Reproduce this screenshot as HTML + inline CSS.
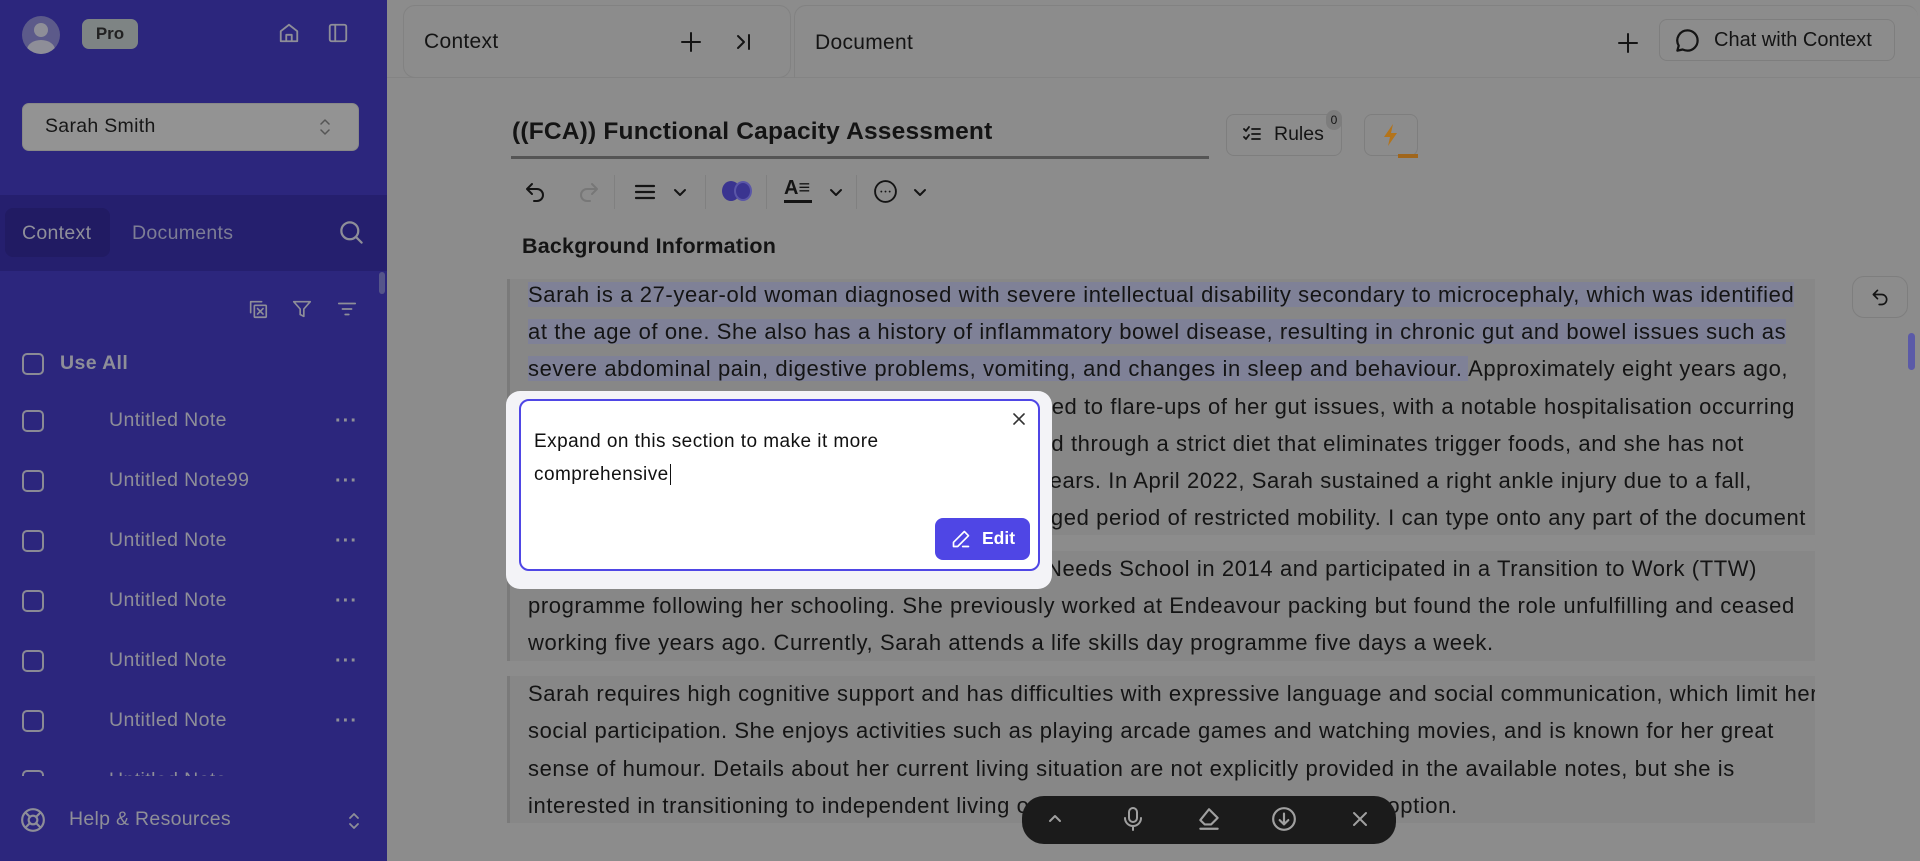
<!DOCTYPE html>
<html><head><meta charset="utf-8"><style>
*{box-sizing:border-box;margin:0;padding:0}
body{width:1920px;height:861px;overflow:hidden;background:#8c8c8c;font-family:"Liberation Sans",sans-serif;position:relative;color:#141414}
.a{position:absolute}
.sb{left:0;top:0;width:387px;height:861px;background:#2c267d;color:#8e8e98}
svg{position:absolute;fill:none;stroke-linecap:round;stroke-linejoin:round}
.row{position:absolute;left:0;width:387px;height:40px}
.cb{position:absolute;left:22px;top:9px;width:22px;height:22px;border:2px solid #8a8a95;border-radius:5px}
.nt{position:absolute;left:109px;top:8px;font-size:19.5px;letter-spacing:0.4px}
.dots{position:absolute;left:335px;top:9px;font-size:20px;letter-spacing:1px;font-weight:bold}
.para{position:absolute;left:507px;width:1308px;background:#878787;border-left:3px solid #7a7a7a;overflow:hidden}
.ln{position:absolute;left:18px;white-space:nowrap;font-size:22px;letter-spacing:0.6px;height:32px;line-height:32px}
.rn{left:auto}
.hl{background:#7f8197}
</style></head><body>
<div class="a sb">
  <div class="a" style="left:22px;top:16px;width:38px;height:38px;border-radius:50%;background:#5c5a8a;overflow:hidden">
    <div class="a" style="left:12px;top:7px;width:14px;height:14px;border-radius:50%;background:#8e8e98"></div>
    <div class="a" style="left:5px;top:24px;width:28px;height:20px;border-radius:50%;background:#8e8e98"></div>
  </div>
  <div class="a" style="left:82px;top:19px;width:56px;height:30px;border-radius:7px;background:#7e8484;color:#222;font-size:17px;font-weight:bold;text-align:center;line-height:30px">Pro</div>
  <svg style="left:278px;top:22px" width="22" height="22" viewBox="0 0 24 24" stroke="#8e8e98" stroke-width="2"><path d="M3 10l9-7 9 7v11H3z M9 21v-7h6v7"/></svg>
  <svg style="left:327px;top:22px" width="22" height="22" viewBox="0 0 24 24" stroke="#8e8e98" stroke-width="2"><rect x="3" y="3" width="18" height="18" rx="2"/><path d="M9 3v18"/></svg>
  <div class="a" style="left:22px;top:103px;width:337px;height:48px;border-radius:7px;background:#939393;border:1px solid #888"></div>
  <div class="a" style="left:45px;top:115px;font-size:19.5px;letter-spacing:0.3px;color:#161616">Sarah Smith</div>
  <svg style="left:318px;top:117px" width="14" height="20" viewBox="0 0 14 20" stroke="#555" stroke-width="1.5"><path d="M3 7l4-4 4 4M3 13l4 4 4-4"/></svg>
  <div class="a" style="left:0;top:195px;width:387px;height:76px;background:#251f6e"></div>
  <div class="a" style="left:5px;top:208px;width:105px;height:49px;border-radius:8px;background:#211b63"></div>
  <div class="a" style="left:22px;top:222px;font-size:19.5px;letter-spacing:0.3px;color:#8f8f9a">Context</div>
  <div class="a" style="left:132px;top:222px;font-size:19.5px;letter-spacing:0.3px;color:#7d7d95">Documents</div>
  <svg style="left:338px;top:219px" width="27" height="27" viewBox="0 0 24 24" stroke="#8e8e98" stroke-width="2"><circle cx="10.5" cy="10.5" r="7.5"/><path d="M16 16l5 5"/></svg>
  <div class="a" style="left:379px;top:272px;width:6px;height:22px;border-radius:3px;background:#55558a"></div>
  <svg style="left:247px;top:298px" width="22" height="22" viewBox="0 0 24 24" stroke="#8e8e98" stroke-width="1.8"><path d="M4 16V4h12"/><rect x="8" y="8" width="13" height="13" rx="1"/><path d="M11.5 11.5l6 6M17.5 11.5l-6 6"/></svg>
  <svg style="left:291px;top:298px" width="22" height="22" viewBox="0 0 24 24" stroke="#8e8e98" stroke-width="1.8"><path d="M3 4h18l-7 8v8l-4-2v-6z"/></svg>
  <svg style="left:336px;top:298px" width="22" height="22" viewBox="0 0 24 24" stroke="#8e8e98" stroke-width="1.8"><path d="M3 6h18M7 12h10M10 18h4"/></svg>
  <div class="row" style="top:344px"><div class="cb"></div><div class="nt" style="left:60px;font-weight:bold">Use All</div></div>
  <div class="row" style="top:401px"><div class="cb"></div><div class="nt">Untitled Note</div><div class="dots">···</div></div>
  <div class="row" style="top:461px"><div class="cb"></div><div class="nt">Untitled Note99</div><div class="dots">···</div></div>
  <div class="row" style="top:521px"><div class="cb"></div><div class="nt">Untitled Note</div><div class="dots">···</div></div>
  <div class="row" style="top:581px"><div class="cb"></div><div class="nt">Untitled Note</div><div class="dots">···</div></div>
  <div class="row" style="top:641px"><div class="cb"></div><div class="nt">Untitled Note</div><div class="dots">···</div></div>
  <div class="row" style="top:701px"><div class="cb"></div><div class="nt">Untitled Note</div><div class="dots">···</div></div>
  <div class="a" style="left:0;top:761px;width:387px;height:15px;overflow:hidden"><div class="row" style="top:0"><div class="cb"></div><div class="nt">Untitled Note</div></div></div>
  <svg style="left:20px;top:807px" width="26" height="26" viewBox="0 0 24 24" stroke="#8e8e98" stroke-width="2"><circle cx="12" cy="12" r="10"/><circle cx="12" cy="12" r="4"/><path d="M5 5l4 4M15 15l4 4M19 5l-4 4M9 15l-4 4"/></svg>
  <div class="a" style="left:69px;top:808px;font-size:19.5px;letter-spacing:0.3px">Help &amp; Resources</div>
  <svg style="left:347px;top:810px" width="14" height="22" viewBox="0 0 14 22" stroke="#8e8e98" stroke-width="1.8"><path d="M3 8l4-4 4 4M3 14l4 4 4-4"/></svg>
</div>

<!-- header -->
<div class="a" style="left:387px;top:77px;width:1533px;height:1px;background:#848484"></div>
<div class="a" style="left:403px;top:5px;width:388px;height:73px;border:1px solid #828282;border-radius:12px;background:#8c8c8c"></div>
<div class="a" style="left:424px;top:30px;font-size:21px;letter-spacing:0.3px">Context</div>
<svg style="left:679px;top:30px" width="24" height="24" viewBox="0 0 24 24" stroke="#141414" stroke-width="2"><path d="M12 3v18M3 12h18"/></svg>
<svg style="left:733px;top:30px" width="22" height="24" viewBox="0 0 22 24" stroke="#141414" stroke-width="2"><path d="M5 6l6 6-6 6M16 5v14"/></svg>
<div class="a" style="left:794px;top:5px;width:1124px;height:73px;border-left:1px solid #828282;border-top:1px solid #828282;border-radius:12px 12px 0 0"></div>
<div class="a" style="left:815px;top:31px;font-size:21px;letter-spacing:0.3px">Document</div>
<svg style="left:1616px;top:31px" width="24" height="24" viewBox="0 0 24 24" stroke="#141414" stroke-width="2"><path d="M12 3v18M3 12h18"/></svg>
<div class="a" style="left:1659px;top:19px;width:236px;height:42px;border:1px solid #7e7e7e;border-radius:8px"></div>
<svg style="left:1674px;top:27px" width="27" height="27" viewBox="0 0 24 24" stroke="#141414" stroke-width="2"><path d="M12 3a9 9 0 0 1 0 18c-1.6 0-3-.4-4.3-1L3 21l1.2-4.4A9 9 0 0 1 12 3z"/></svg>
<div class="a" style="left:1714px;top:29px;font-size:20px">Chat with Context</div>

<!-- title -->
<div class="a" style="left:512px;top:118px;font-size:24.5px;font-weight:bold;letter-spacing:0.2px">((FCA)) Functional Capacity Assessment</div>
<div class="a" style="left:511px;top:156px;width:698px;height:3px;background:#555"></div>
<div class="a" style="left:1226px;top:114px;width:116px;height:42px;border:1px solid #7e7e7e;border-radius:8px"></div>
<svg style="left:1242px;top:124px" width="20" height="20" viewBox="0 0 20 20" stroke="#141414" stroke-width="1.8"><path d="M2 5l2 2 3-4M2 13l2 2 3-4M10 5h8M10 10h8M10 15h8"/></svg>
<div class="a" style="left:1274px;top:123px;font-size:19.5px">Rules</div>
<div class="a" style="left:1326px;top:110px;width:16px;height:20px;border-radius:8px;background:#7d7d7d;font-size:12px;text-align:center;line-height:20px">0</div>
<div class="a" style="left:1364px;top:114px;width:54px;height:42px;border:1px solid #7e7e7e;border-radius:8px"></div>
<svg style="left:1380px;top:123px;fill:#b4741a" width="22" height="24" viewBox="0 0 22 24" stroke="none"><path d="M13 1L4 14h6l-2 9 9-13h-6z"/></svg>
<div class="a" style="left:1398px;top:154px;width:20px;height:4px;background:#a0661c"></div>

<!-- toolbar -->
<svg style="left:523px;top:180px" width="24" height="24" viewBox="0 0 24 24" stroke="#141414" stroke-width="2"><path d="M9 14L4 9l5-5M4 9h10a6 6 0 0 1 0 12h-3"/></svg>
<svg style="left:577px;top:180px" width="24" height="24" viewBox="0 0 24 24" stroke="#777" stroke-width="2"><path d="M15 14l5-5-5-5M20 9H10a6 6 0 0 0 0 12h3"/></svg>
<div class="a" style="left:614px;top:175px;width:1px;height:34px;background:#808080"></div>
<svg style="left:633px;top:180px" width="24" height="24" viewBox="0 0 24 24" stroke="#141414" stroke-width="2.2"><path d="M3 6h18M3 12h18M3 18h18"/></svg>
<svg style="left:672px;top:184px" width="16" height="16" viewBox="0 0 16 16" stroke="#141414" stroke-width="2"><path d="M3 6l5 5 5-5"/></svg>
<div class="a" style="left:705px;top:175px;width:1px;height:34px;background:#808080"></div>
<div class="a" style="left:722px;top:181px;width:18px;height:20px;border-radius:50%;background:#3a3490"></div>
<div class="a" style="left:734px;top:181px;width:18px;height:20px;border-radius:50%;background:#3a3490;border:2px solid #5a56a8"></div>
<div class="a" style="left:766px;top:175px;width:1px;height:34px;background:#808080"></div>
<div class="a" style="left:784px;top:177px;font-size:20px;font-weight:bold">A≡</div>
<div class="a" style="left:784px;top:200px;width:28px;height:3px;background:#141414"></div>
<svg style="left:828px;top:184px" width="16" height="16" viewBox="0 0 16 16" stroke="#141414" stroke-width="2"><path d="M3 6l5 5 5-5"/></svg>
<div class="a" style="left:856px;top:175px;width:1px;height:34px;background:#808080"></div>
<svg style="left:873px;top:179px" width="25" height="25" viewBox="0 0 24 24" stroke="#141414" stroke-width="1.8"><circle cx="12" cy="12" r="10"/><path d="M8 12h.01M12 12h.01M16 12h.01"/></svg>
<svg style="left:912px;top:184px" width="16" height="16" viewBox="0 0 16 16" stroke="#141414" stroke-width="2"><path d="M3 6l5 5 5-5"/></svg>

<div class="a" style="left:522px;top:234px;font-size:21.5px;font-weight:bold;letter-spacing:0.2px">Background Information</div>

<div class="para" style="top:279px;height:256px">
  <div class="ln" style="top:0"><span class="hl">Sarah is a 27-year-old woman diagnosed with severe intellectual disability secondary to microcephaly, which was identified </span></div>
  <div class="ln" style="top:37px"><span class="hl">at the age of one. She also has a history of inflammatory bowel disease, resulting in chronic gut and bowel issues such as </span></div>
  <div class="ln" style="top:74px"><span class="hl">severe abdominal pain, digestive problems, vomiting, and changes in sleep and behaviour. </span>Approximately eight years ago,</div>
  <div class="ln rn" style="top:112px;right:20px">Sarah experienced a significant decline in her health, linked to flare-ups of her gut issues, with a notable hospitalisation occurring</div>
  <div class="ln rn" style="top:149px;right:71px">in 2016. Her condition is currently managed through a strict diet that eliminates trigger foods, and she has not</div>
  <div class="ln rn" style="top:186px;right:63px">been hospitalised for gut issues in the last few years. In April 2022, Sarah sustained a right ankle injury due to a fall,</div>
  <div class="ln rn" style="top:223px;right:9px">which resulted in surgery and a prolonged period of restricted mobility. I can type onto any part of the document</div>
</div>
<div class="para" style="top:551px;height:110px">
  <div class="ln" style="top:2px">Sarah graduated from Year 12 at the Hills Special Needs School in 2014 and participated in a Transition to Work (TTW)</div>
  <div class="ln" style="top:39px">programme following her schooling. She previously worked at Endeavour packing but found the role unfulfilling and ceased</div>
  <div class="ln" style="top:76px">working five years ago. Currently, Sarah attends a life skills day programme five days a week.</div>
</div>
<div class="para" style="top:676px;height:147px">
  <div class="ln" style="top:2px">Sarah requires high cognitive support and has difficulties with expressive language and social communication, which limit her</div>
  <div class="ln" style="top:39px">social participation. She enjoys activities such as playing arcade games and watching movies, and is known for her great</div>
  <div class="ln" style="top:77px">sense of humour. Details about her current living situation are not explicitly provided in the available notes, but she is</div>
  <div class="ln" style="top:114px">interested in transitioning to independent living or supported accommodation as an option.</div>
</div>

<div class="a" style="left:1852px;top:276px;width:56px;height:42px;border:1px solid #7e7e7e;border-radius:12px;background:#8c8c8c"></div>
<svg style="left:1870px;top:287px" width="20" height="20" viewBox="0 0 24 24" stroke="#141414" stroke-width="2"><path d="M9 14L4 9l5-5M4 9h10a6 6 0 0 1 0 12h-3"/></svg>
<div class="a" style="left:1908px;top:333px;width:7px;height:37px;border-radius:4px;background:#5b5aa8"></div>

<!-- popup -->
<div class="a" style="left:506px;top:391px;width:546px;height:198px;border-radius:14px;background:#f3f3f7"></div>
<div class="a" style="left:519px;top:399px;width:521px;height:172px;border-radius:10px;background:#fff;border:2.5px solid #4f46e5"></div>
<div class="a" style="left:534px;top:425px;font-size:19px;letter-spacing:0.45px;line-height:33px;color:#111">Expand on this section to make it more<br>comprehensive<span style="border-left:1.5px solid #111;margin-left:1px"></span></div>
<svg style="left:1012px;top:412px" width="14" height="14" viewBox="0 0 14 14" stroke="#333" stroke-width="1.6"><path d="M2 2l10 10M12 2L2 12"/></svg>
<div class="a" style="left:935px;top:518px;width:95px;height:42px;border-radius:8px;background:#4f46e5"></div>
<svg style="left:951px;top:529px" width="20" height="20" viewBox="0 0 24 24" stroke="#fff" stroke-width="2"><path d="M16 3l5 5L8 21H3v-5z M14 21h7"/></svg>
<div class="a" style="left:982px;top:528px;font-size:17.5px;font-weight:bold;color:#fff">Edit</div>

<!-- bottom bar -->
<div class="a" style="left:1022px;top:796px;width:374px;height:48px;border-radius:22px;background:#1b1b1b"></div>
<svg style="left:1045px;top:809px" width="20" height="20" viewBox="0 0 20 20" stroke="#a0a0a0" stroke-width="2"><path d="M5 12l5-5 5 5"/></svg>
<svg style="left:1121px;top:806px" width="24" height="26" viewBox="0 0 24 26" stroke="#a0a0a0" stroke-width="2"><rect x="8" y="2" width="8" height="14" rx="4"/><path d="M4 12a8 8 0 0 0 16 0M12 20v4"/></svg>
<svg style="left:1196px;top:806px" width="26" height="26" viewBox="0 0 24 24" stroke="#a0a0a0" stroke-width="2"><path d="M12 3l8 8-6 6H8l-4-4z M4 21h16"/></svg>
<svg style="left:1271px;top:806px" width="26" height="26" viewBox="0 0 24 24" stroke="#a0a0a0" stroke-width="2"><circle cx="12" cy="12" r="10"/><path d="M12 7v10M8 13l4 4 4-4"/></svg>
<svg style="left:1350px;top:809px" width="20" height="20" viewBox="0 0 20 20" stroke="#a0a0a0" stroke-width="2"><path d="M4 4l12 12M16 4L4 16"/></svg>
</body></html>
